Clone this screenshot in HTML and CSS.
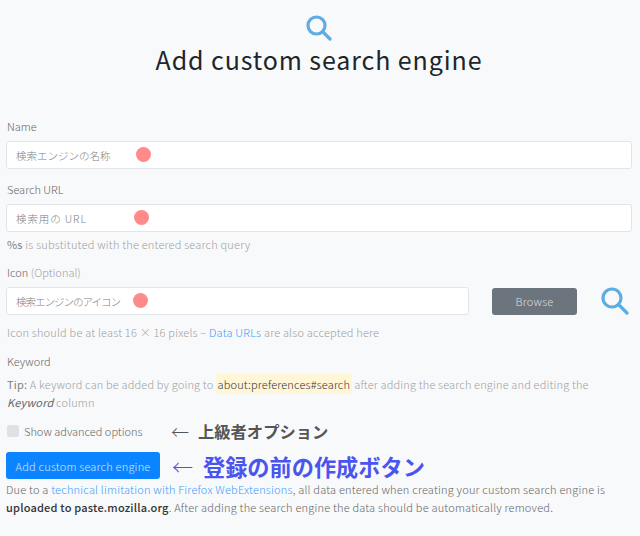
FILE: index.html
```html
<!DOCTYPE html>
<html lang="ja">
<head>
<meta charset="utf-8">
<title>Add custom search engine</title>
<link rel="stylesheet" href="styles.css">
</head>
<body>
<main class="page">
  <header class="head">
    <svg class="logo" viewBox="0 0 26 26" width="26" height="26"><circle cx="10.5" cy="10.5" r="8.5" fill="none" stroke="#5dade2" stroke-width="3.2"/><path d="M17 17l7 7" stroke="#5dade2" stroke-width="3.2" stroke-linecap="round"/></svg>
    <h1>Add custom search engine</h1>
  </header>
  <section class="field first">
    <label class="label">Name</label>
    <div class="inputwrap"><input class="input" placeholder="検索エンジンの名称"><span class="dot d1"></span></div>
  </section>
  <section class="field second">
    <label class="label">Search URL</label>
    <div class="inputwrap"><input class="input wide" placeholder="検索用の URL"><span class="dot d2"></span></div>
    <p class="help"><b>%s</b> is substituted with the entered search query</p>
  </section>
  <section class="field third">
    <label class="label">Icon <span class="muted">(Optional)</span></label>
    <div class="iconrow">
      <div class="inputwrap grow"><input class="input narrow" placeholder="検索エンジンのアイコン"><span class="dot d3"></span></div>
      <button class="btn browse">Browse</button>
      <svg class="preview" viewBox="0 0 28 28" width="28" height="28"><circle cx="11" cy="11" r="9" fill="none" stroke="#5dade2" stroke-width="3.2"/><path d="M18 18l8 8" stroke="#5dade2" stroke-width="3.2" stroke-linecap="round"/></svg>
    </div>
    <p class="help icon-help">Icon should be at least 16 × 16 pixels – <a href="#">Data URLs</a> are also accepted here</p>
  </section>
  <section class="field fourth">
    <label class="label">Keyword</label>
    <p class="tip"><b>Tip:</b> A keyword can be added by going to <code>about:preferences#search</code> after adding the search engine and editing the <b class="kw">Keyword</b> column</p>
  </section>
  <div class="check">
    <span class="box"></span><span class="checktext">Show advanced options</span>
    <span class="note gray"><span class="arrow">←</span>上級者オプション</span>
  </div>
  <div class="submit">
    <button class="btn primary">Add custom search engine</button>
    <span class="note blue"><span class="arrow">←</span>登録の前の作成ボタン</span>
  </div>
  <p class="foot">Due to a <a href="#">technical limitation with Firefox WebExtensions</a>, all data entered when creating your custom search engine is <b>uploaded to paste.mozilla.org</b>. After adding the search engine the data should be automatically removed.</p>
</main>
</body>
</html>
```

FILE: styles.css
```css
* { box-sizing: border-box; }
html, body { margin: 0; padding: 0; }
body {
  background: #f8f9fb;
  color: #666;
  font-family: "Noto Sans CJK JP", "Noto Sans", sans-serif;
  font-size: 11px;
  font-weight: 300;
  width: 640px;
  height: 536px;
  overflow: hidden;
}
.page { padding: 15px 8px 0 6px; }
.head { text-align: center; }
.logo { display: block; margin: 0 0 0 300px; }
h1 {
  margin: 2px 0 0;
  font-size: 25px;
  line-height: 32px;
  font-weight: 400;
  color: #212529;
  letter-spacing: 0.9px;
}
.label { display: block; font-size: 11px; line-height: 16px; color: #666; padding-left: 1px; }
.muted { color: #a0a0a0; }
.field.first { margin-top: 43px; }
.field.second { margin-top: 12px; }
.field.third { margin-top: 12px; }
.field.fourth { margin-top: 13px; }
.inputwrap { position: relative; margin-top: 7px; }
.grow { width: 463px; margin-top: 0; }
.input {
  display: block;
  width: 100%;
  height: 28px;
  padding: 0 9px;
  border: 1px solid #e1e4e8;
  border-radius: 3px;
  background: #fff;
  font: 300 10.5px "Noto Sans CJK JP", "Noto Sans", sans-serif;
}
.wide { letter-spacing: 0.9px; }
.narrow { letter-spacing: -1px; }
.input::placeholder { color: #808080; opacity: 1; }
.dot { position: absolute; top: 6px; width: 15px; height: 15px; border-radius: 50%; background: #ff8a8a; }
.d1 { left: 129.5px; }
.d2 { left: 128px; }
.d3 { left: 127px; }
.help { margin: 4px 0 0 1px; font-size: 11px; line-height: 16px; color: #a0a0a0; letter-spacing: 0.2px; }
.icon-help { margin-top: 9px; }
.help b { color: #808080; }
a { color: #3d9bff; text-decoration: none; }
.iconrow { display: flex; align-items: center; margin-top: 7px; }
.btn { border: 0; border-radius: 3px; font: 300 11px "Noto Sans CJK JP", "Noto Sans", sans-serif; color: #fff; letter-spacing: 0.2px; }
.browse { width: 85px; height: 27px; margin-left: 23px; background: #6c757d; color: #ddd; }
.preview { margin-left: 24px; }
.tip { margin: 6px 0 0 1px; font-size: 11px; line-height: 18px; color: #a0a0a0; letter-spacing: 0.16px; }
.tip > b:first-child { color: #808080; }
.kw { font-style: italic; color: #666; }
code { font: inherit; color: #333; background: #fff6d8; padding: 2px 1.5px; }
.check { display: flex; align-items: center; height: 20px; margin-top: 10px; }
.box { width: 12px; height: 12px; margin-left: 1px; border-radius: 2px; background: #dee2e6; }
.checktext { margin-left: 5px; width: 147px; color: #666; }
.note { font-weight: 700; white-space: nowrap; display: flex; align-items: center; }
.gray { font-size: 16.3px; color: #555; }
.blue { font-size: 22.2px; color: #4a55f0; }
.arrow { font-weight: 300; font-size: 18px; }
.gray .arrow { width: 27px; }
.blue .arrow { width: 31px; font-size: 21px; }
.submit { display: flex; align-items: center; margin-top: 11px; height: 27px; }
.primary { width: 154px; height: 27px; background: #0d84ff; color: #cfe4ff; margin-right: 12px; }
.foot { margin: 2px 0 0; font-size: 11px; line-height: 17.5px; color: #666; letter-spacing: 0.2px; }
.foot b { color: #333; font-weight: 500; }
```
